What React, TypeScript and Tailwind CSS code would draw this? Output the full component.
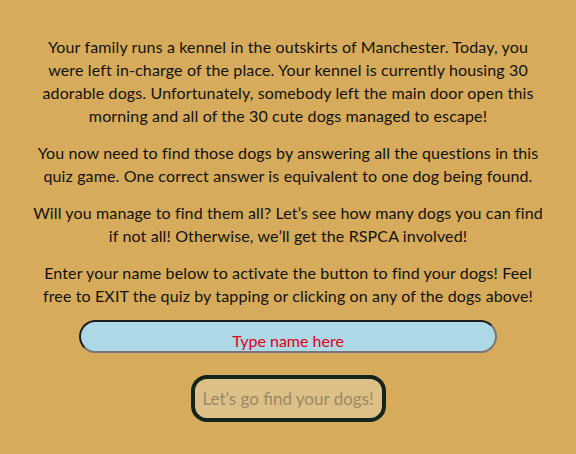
import { useState } from 'react';

const paragraphs = [
  [
    'Your family runs a kennel in the outskirts of Manchester. Today, you',
    'were left in-charge of the place. Your kennel is currently housing 30',
    'adorable dogs. Unfortunately, somebody left the main door open this',
    'morning and all of the 30 cute dogs managed to escape!',
  ],
  [
    'You now need to find those dogs by answering all the questions in this',
    'quiz game. One correct answer is equivalent to one dog being found.',
  ],
  [
    'Will you manage to find them all? Let\u2019s see how many dogs you can find',
    'if not all! Otherwise, we\u2019ll get the RSPCA involved!',
  ],
  [
    'Enter your name below to activate the button to find your dogs! Feel',
    'free to EXIT the quiz by tapping or clicking on any of the dogs above!',
  ],
];

export default function App() {
  const [name, setName] = useState('');

  return (
    <div className="min-h-screen bg-[#d6ab5b] flex flex-col items-center pt-[34.5px] font-['Lato',sans-serif]">
      <div className="text-center text-[16px] leading-[23px] tracking-[0.13px] text-[#12110e]">
        {paragraphs.map((lines, i) => (
          <p key={i} className="mb-[14px] last:mb-0">
            {lines.map((line, j) => (
              <span key={j} className="block">
                {line}
              </span>
            ))}
          </p>
        ))}
      </div>

      <input
        type="text"
        value={name}
        onChange={(e) => setName(e.target.value)}
        placeholder="Type name here"
        className="mt-[13.5px] w-[418px] h-[33px] rounded-full bg-[#add8e6] border-2 border-t-[#1c1c1c] border-l-[#1c1c1c] border-b-[#767676] border-r-[#767676] text-center text-[16px] pt-[8px] text-[#e0001b] placeholder:text-[#e0001b] outline-none font-['Lato',sans-serif]"
      />

      <button
        disabled={name.trim() === ''}
        className="mt-[22px] w-[195px] h-[47px] rounded-[16px] border-4 border-[#13241a] bg-[#ddbf88] text-[#9a8a64] text-[17px] font-['Lato',sans-serif]"
      >
        Let&rsquo;s go find your dogs!
      </button>
    </div>
  );
}
